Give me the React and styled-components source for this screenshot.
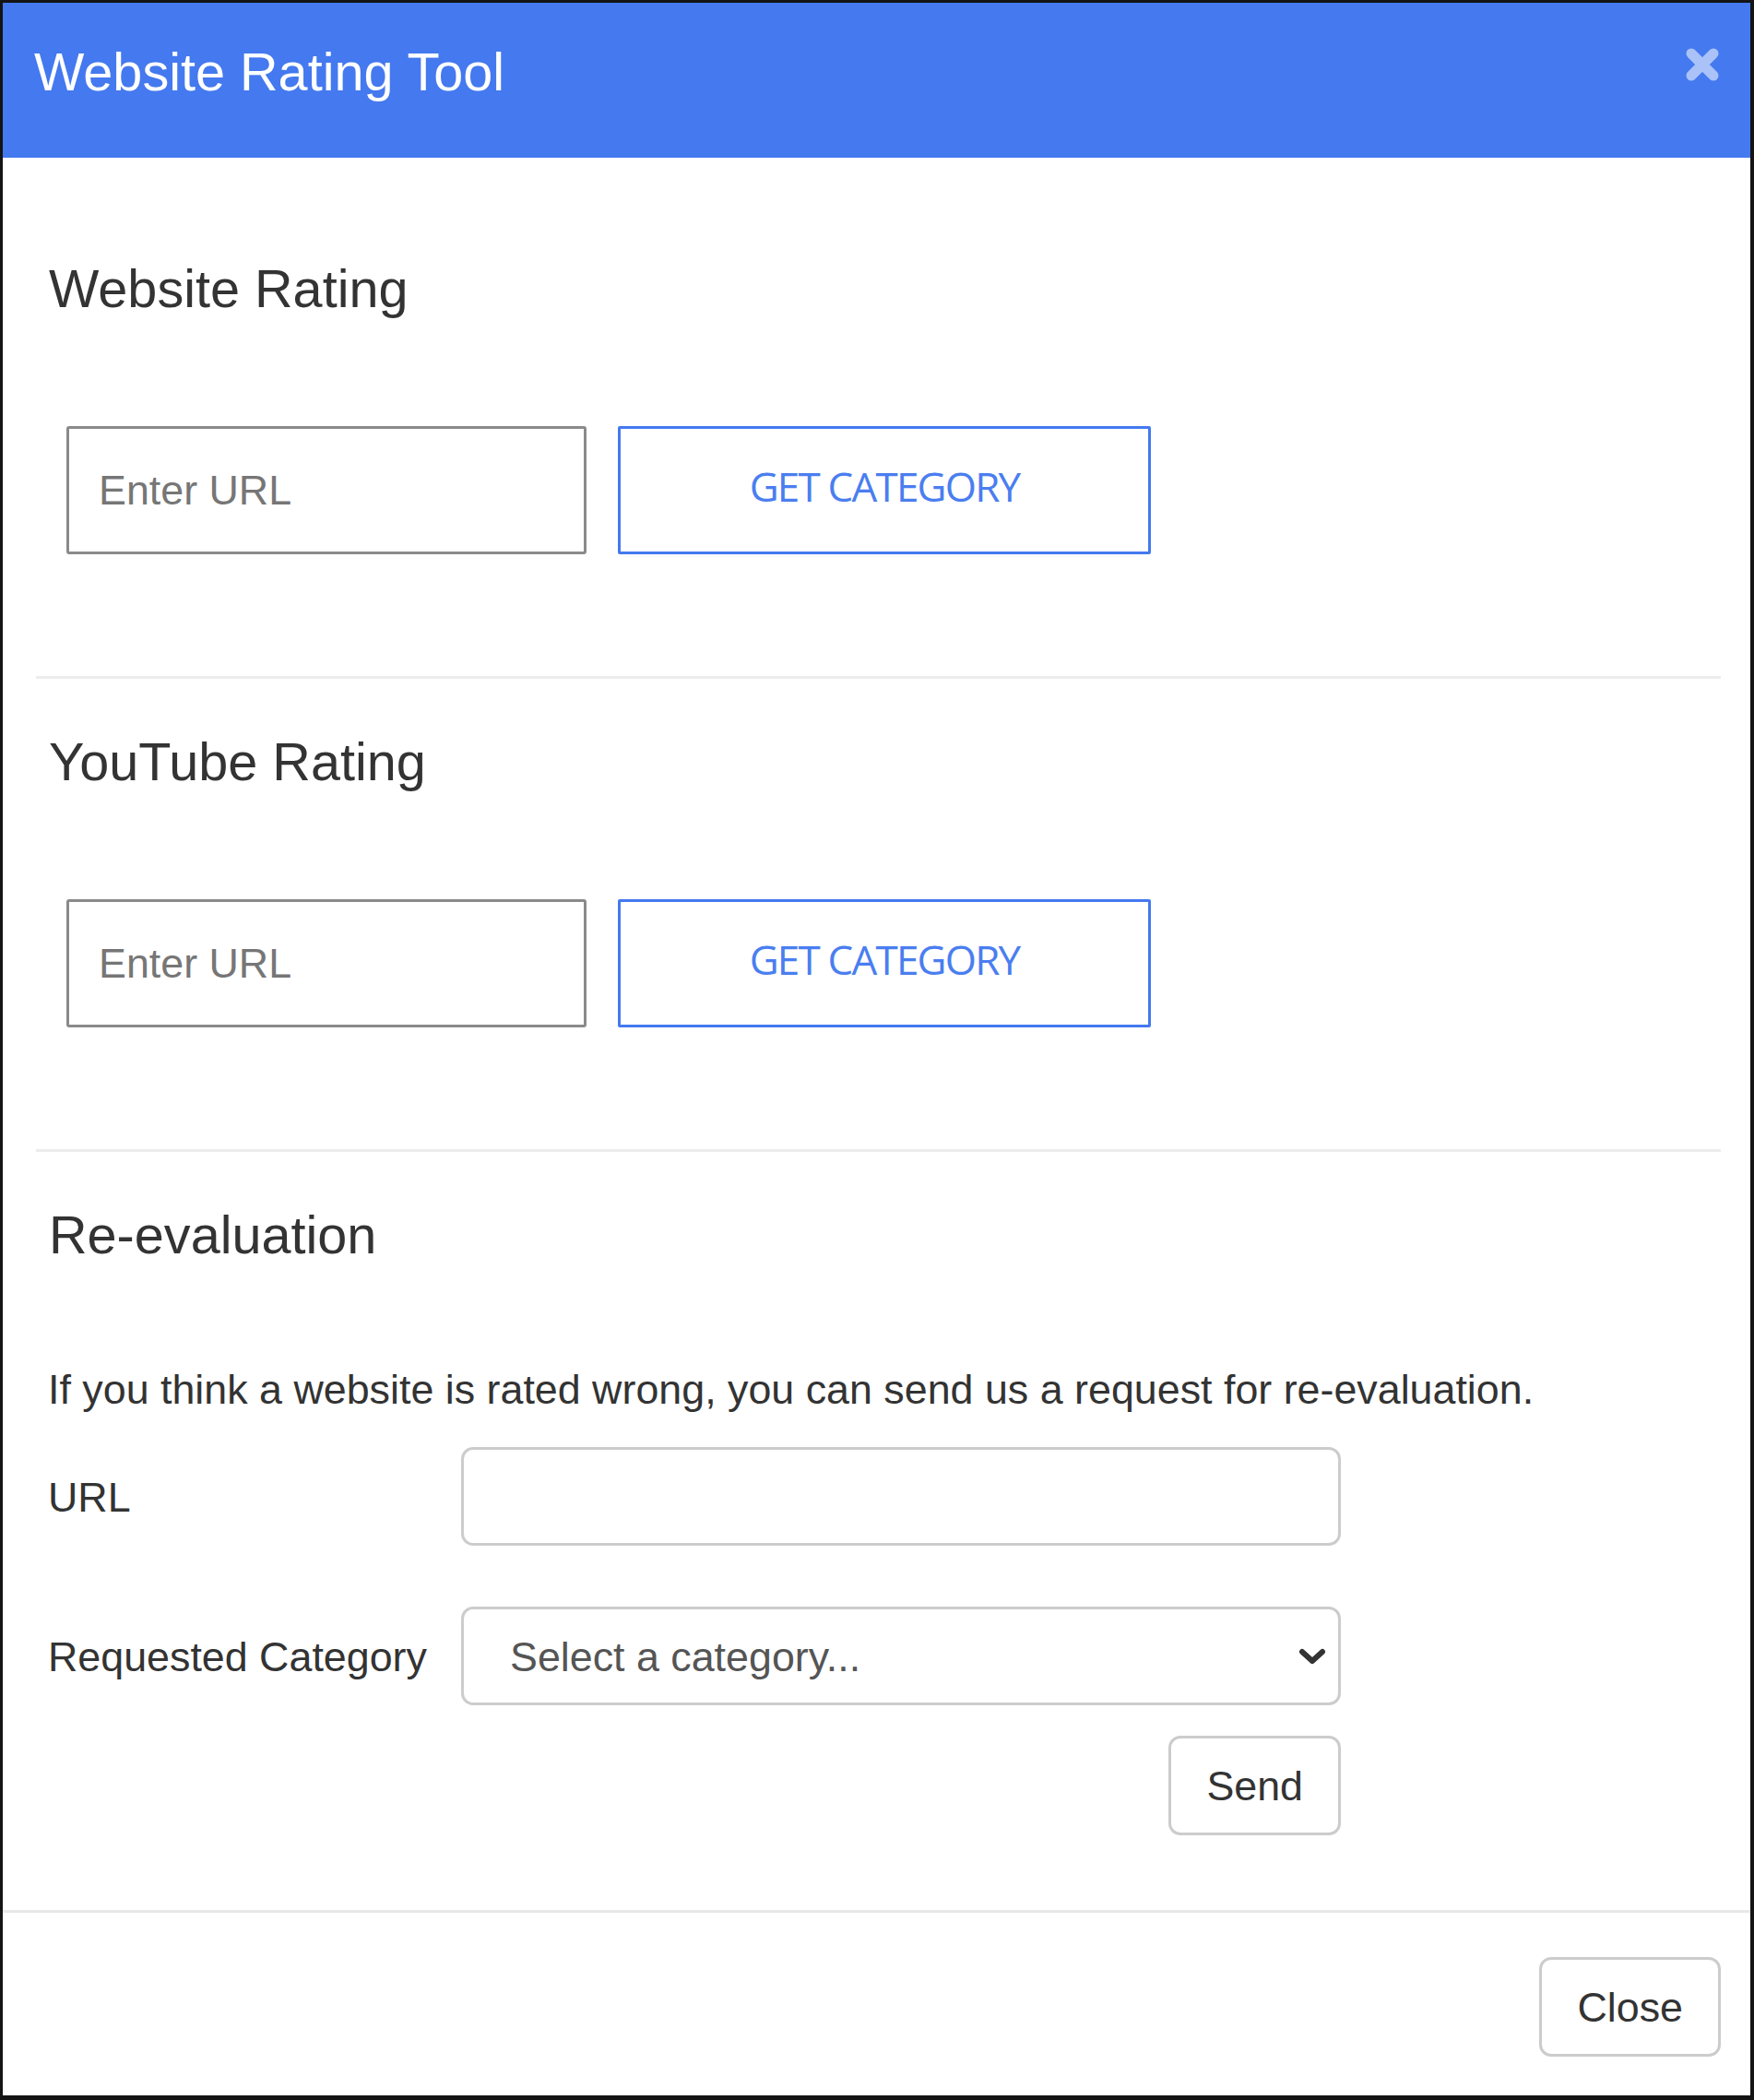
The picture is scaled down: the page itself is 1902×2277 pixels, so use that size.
import React from "react";
import styled, { createGlobalStyle } from "styled-components";

const GlobalStyle = createGlobalStyle`
  html, body { margin: 0; padding: 0; background: #ffffff; }
  * { box-sizing: border-box; }
`;

const Modal = styled.div`
  width: 1902px;
  height: 2277px;
  border-style: solid;
  border-color: #141414;
  border-width: 3px 4px 5px 3px;
  background: #ffffff;
  display: flex;
  flex-direction: column;
  font-family: "Liberation Sans", Arial, sans-serif;
  color: #333333;
`;

const Header = styled.div`
  height: 168px;
  flex: 0 0 168px;
  background: #4479ef;
  display: flex;
  justify-content: space-between;
  align-items: flex-start;
  padding: 44px 34px 0 34px;
`;

const Title = styled.h4`
  margin: 0;
  font-size: 57.6px;
  line-height: 1.1;
  font-weight: 400;
  color: #ffffff;
`;

const CloseX = styled.button`
  margin-top: 5px;
  padding: 0;
  border: 0;
  background: transparent;
  width: 36px;
  height: 36px;
  display: block;
  cursor: pointer;
`;

const Body = styled.div`
  padding: 0 32px 81px 36px;
`;

const Section = styled.section`
  padding-top: ${(p) => (p.$first ? "108px" : "56px")};
  padding-bottom: ${(p) => (p.$last ? "0" : "132px")};
`;

const Heading = styled.h4`
  margin: 0;
  padding-left: 14px;
  font-size: 57.6px;
  line-height: 1.2;
  font-weight: 400;
  color: #333333;
`;

const Divider = styled.hr`
  margin: 0;
  border: 0;
  border-top: 3px solid #ececec;
  height: 0;
`;

const LookupRow = styled.div`
  margin-top: 114px;
  padding-left: 33px;
  display: flex;
  gap: 34px;
`;

const UrlInput = styled.input`
  width: 564px;
  height: 139px;
  border: 3px solid #8a8a8a;
  border-radius: 3px;
  padding: 0 0 0 32px;
  font-family: "Liberation Sans", Arial, sans-serif;
  font-size: 44.8px;
  color: #333333;
  background: #ffffff;
  outline: none;
  &::placeholder { color: #767676; }
`;

const CategoryButton = styled.button`
  width: 578px;
  height: 139px;
  border: 3px solid #4479ef;
  border-radius: 2px;
  background: #ffffff;
  color: #4a7ef0;
  font-family: "Open Sans", "Noto Sans", sans-serif;
  font-size: 44px;
  letter-spacing: -1.8px;
  font-weight: 500;
  padding: 0 0 9px 0;
  cursor: pointer;
`;

const Paragraph = styled.p`
  margin: 100px 0 0 0;
  padding-left: 13px;
  font-size: 44.8px;
  line-height: 64px;
  color: #333333;
`;

const Form = styled.div`
  margin-top: 31px;
  padding-left: 13px;
  display: grid;
  grid-template-columns: 448px 954px;
  row-gap: 66px;
  align-items: center;
`;

const Label = styled.label`
  font-size: 44.8px;
  line-height: 64px;
  color: #333333;
`;

const TextField = styled.input`
  width: 954px;
  height: 107px;
  border: 3px solid #cccccc;
  border-radius: 13px;
  padding: 0 38px;
  font-family: "Liberation Sans", Arial, sans-serif;
  font-size: 44.8px;
  color: #555555;
  background: #ffffff;
  outline: none;
`;

const SelectWrap = styled.div`
  position: relative;
  width: 954px;
  height: 107px;
`;

const Select = styled.select`
  appearance: none;
  -webkit-appearance: none;
  width: 100%;
  height: 100%;
  border: 3px solid #cccccc;
  border-radius: 13px;
  padding: 0 80px 0 50px;
  font-family: "Liberation Sans", Arial, sans-serif;
  font-size: 44.8px;
  color: #555555;
  background: #ffffff;
  outline: none;
`;

const Chevron = styled.svg`
  position: absolute;
  right: 16px;
  top: 44px;
  width: 30px;
  height: 20px;
  pointer-events: none;
`;

const SendRow = styled.div`
  margin-top: 33px;
  width: 1415px;
  display: flex;
  justify-content: flex-end;
`;

const DefaultButton = styled.button`
  height: 108px;
  padding: 0 38px;
  border: 3px solid #cccccc;
  border-radius: 13px;
  background: #ffffff;
  color: #333333;
  font-family: "Liberation Sans", Arial, sans-serif;
  font-size: 44.8px;
  cursor: pointer;
`;

const Footer = styled.div`
  flex: 1;
  border-top: 3px solid #e8e8e8;
  padding: 48px 32px 0 0;
  display: flex;
  justify-content: flex-end;
  align-items: flex-start;
`;

function LookupSection({ title, first }) {
  return (
    <Section $first={first}>
      <Heading>{title}</Heading>
      <LookupRow>
        <UrlInput type="text" placeholder="Enter URL" />
        <CategoryButton type="button">GET CATEGORY</CategoryButton>
      </LookupRow>
    </Section>
  );
}

export default function App() {
  return (
    <>
      <GlobalStyle />
      <Modal>
        <Header>
          <Title>Website Rating Tool</Title>
          <CloseX type="button" aria-label="Close">
            <svg width="36" height="36" viewBox="0 0 36 36">
              <path
                d="M6 6 L30 30 M30 6 L6 30"
                stroke="rgba(255,255,255,0.55)"
                strokeWidth="11"
                strokeLinecap="round"
                fill="none"
              />
            </svg>
          </CloseX>
        </Header>
        <Body>
          <LookupSection title="Website Rating" first />
          <Divider />
          <LookupSection title="YouTube Rating" />
          <Divider />
          <Section $last>
            <Heading>Re-evaluation</Heading>
            <Paragraph>
              If you think a website is rated wrong, you can send us a request for re-evaluation.
            </Paragraph>
            <Form>
              <Label htmlFor="reeval-url">URL</Label>
              <TextField id="reeval-url" type="text" />
              <Label htmlFor="reeval-cat">Requested Category</Label>
              <SelectWrap>
                <Select id="reeval-cat" defaultValue="">
                  <option value="">Select a category...</option>
                </Select>
                <Chevron viewBox="0 0 30 20">
                  <path
                    d="M4 5 L15 15 L26 5"
                    stroke="#333333"
                    strokeWidth="6"
                    strokeLinecap="round"
                    strokeLinejoin="round"
                    fill="none"
                  />
                </Chevron>
              </SelectWrap>
            </Form>
            <SendRow>
              <DefaultButton type="button">Send</DefaultButton>
            </SendRow>
          </Section>
        </Body>
        <Footer>
          <DefaultButton type="button">Close</DefaultButton>
        </Footer>
      </Modal>
    </>
  );
}
